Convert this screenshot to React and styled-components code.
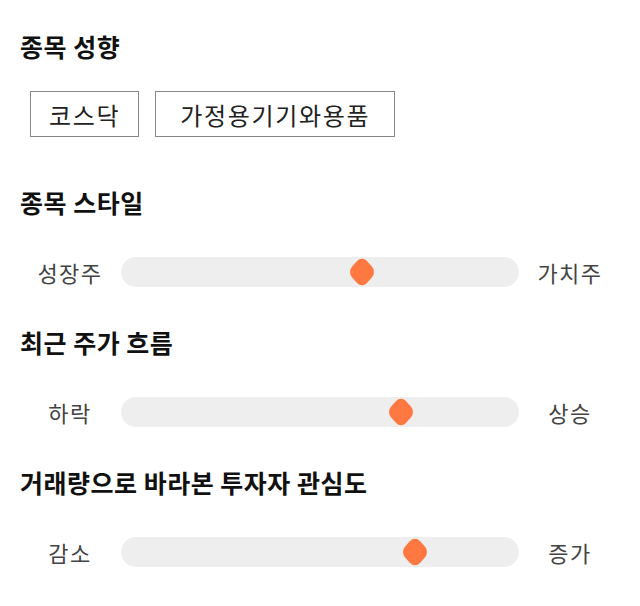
import React from "react";
import styled, { createGlobalStyle } from "styled-components";

const GlobalStyle = createGlobalStyle`
  body {
    margin: 0;
    background: #ffffff;
    font-family: "Noto Sans CJK KR", "Noto Sans", sans-serif;
  }
`;

const Page = styled.div`
  width: 640px;
  padding: 26px 20px 0;
  box-sizing: border-box;
`;

const Section = styled.section`
  display: flex;
  flex-direction: column;
  margin-bottom: ${({ $gap }) => $gap || 0}px;
`;

const Title = styled.h3`
  margin: 0;
  height: 40px;
  display: flex;
  align-items: center;
  color: #111111;
  font-size: 25px;
  font-weight: 700;
  letter-spacing: 0.02em;
`;

const Chips = styled.div`
  display: flex;
  gap: 16px;
  margin-top: 25px;
  padding-left: 10px;
`;

const Chip = styled.span`
  display: flex;
  align-items: center;
  height: 46px;
  padding: 0 ${({ $pad }) => $pad}px;
  box-sizing: border-box;
  border: 1px solid #888888;
  color: #222222;
  font-size: 24px;
  letter-spacing: 0.07em;
`;

const SliderRow = styled.div`
  display: grid;
  grid-template-columns: 100px 1fr 100px;
  align-items: center;
  height: 30px;
  margin-top: ${({ $top }) => $top}px;
`;

const Label = styled.span`
  text-align: center;
  color: #444444;
  font-size: 22px;
  letter-spacing: 1.5px;
`;

const Track = styled.div`
  position: relative;
  height: 30px;
  margin: 0 1px;
  border-radius: 15px;
  background: #eeeeee;
`;

const Thumb = styled.span`
  position: absolute;
  top: 50%;
  width: 21px;
  height: 21px;
  border-radius: 7px;
  background: #ff7842;
  transform: translate(-50%, -50%) scaleY(1.1) rotate(45deg);
`;

const chips = [
  { label: "코스닥", pad: 18 },
  { label: "가정용기기와용품", pad: 24 },
];

const sliders = [
  { title: "종목 스타일", left: "성장주", right: "가치주", pos: 241 },
  { title: "최근 주가 흐름", left: "하락", right: "상승", pos: 280 },
  { title: "거래량으로 바라본 투자자 관심도", left: "감소", right: "증가", pos: 294 },
];

export default function App() {
  return (
    <Page>
      <GlobalStyle />
      <Section $gap={45}>
        <Title>종목 성향</Title>
        <Chips>
          {chips.map((c) => (
            <Chip key={c.label} $pad={c.pad}>
              {c.label}
            </Chip>
          ))}
        </Chips>
      </Section>

      {sliders.map((s) => (
        <Section key={s.title} $gap={36}>
          <Title>{s.title}</Title>
          <SliderRow $top={34}>
            <Label>{s.left}</Label>
            <Track>
              <Thumb style={{ left: s.pos }} />
            </Track>
            <Label>{s.right}</Label>
          </SliderRow>
        </Section>
      ))}
    </Page>
  );
}
